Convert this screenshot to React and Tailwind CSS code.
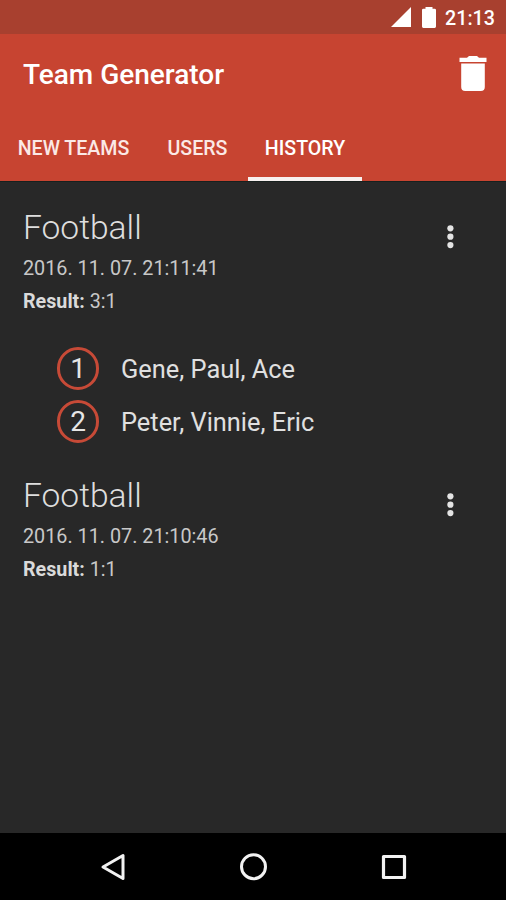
import { useState } from "react";

const tabs = [
  { id: "teams", label: "NEW TEAMS", width: "w-[147px]" },
  { id: "users", label: "USERS", width: "w-[101px]" },
  { id: "history", label: "HISTORY", width: "w-[114px]" },
];

const games = [
  {
    name: "Football",
    date: "2016. 11. 07. 21:11:41",
    result: "3:1",
    teams: ["Gene, Paul, Ace", "Peter, Vinnie, Eric"],
  },
  { name: "Football", date: "2016. 11. 07. 21:10:46", result: "1:1", teams: [] },
];

function StatusBar() {
  return (
    <div className="flex h-[34px] shrink-0 items-center justify-end bg-[#a8402f] pr-[11px] text-white">
      <svg className="mr-[11px] h-5 w-5" viewBox="0 0 20 20" fill="currentColor">
        <path d="M20 0v20H0z" />
      </svg>
      <svg className="mr-[9px] h-[21px] w-[14px]" viewBox="0 0 14 21" fill="currentColor">
        <path d="M3.5 0h7v1.7h2.1Q14 1.7 14 3.1v16.5q0 1.4-1.4 1.4H1.4Q0 21 0 19.6V3.1Q0 1.7 1.4 1.7h2.1z" />
      </svg>
      <span className="pt-[3px] text-[19.7px] leading-6 font-medium">21:13</span>
    </div>
  );
}

function Toolbar() {
  return (
    <div className="flex h-[80px] items-center justify-between pr-[19px] pl-[23px]">
      <h1 className="pt-[2px] text-[28px] leading-8 font-medium">Team Generator</h1>
      <button title="Delete">
        <svg className="h-[36px] w-[28px]" viewBox="0 0 28 36" fill="currentColor">
          <path d="M0.5 1.8h7.5l2-1.8h8l2 1.8h7.5v4.2H0.5zM2.2 7.5h23.6v23.5a4 4 0 0 1-4 4h-15.6a4 4 0 0 1-4-4z" />
        </svg>
      </button>
    </div>
  );
}

function Game({ game }) {
  return (
    <section className="flex flex-col">
      <div className="flex items-start justify-between">
        <div className="pl-[23px]">
          <h2 className="text-[33.6px] leading-[40px] font-light text-[#dedede]">{game.name}</h2>
          <p className="mt-[9px] text-[19.8px] leading-6 text-[#c8c8c8]">{game.date}</p>
          <p className="mt-[9px] text-[19.7px] leading-6 text-[#c8c8c8]">
            <b className="font-bold text-[#dadada]">Result:</b> {game.result}
          </p>
        </div>
        <button className="mt-[17px] mr-[52px]" title="More">
          <svg className="h-6 w-[8px]" viewBox="0 0 8 24" fill="#e4e4e4">
            <circle cx="4.4" cy="3.3" r="3.1" />
            <circle cx="4.4" cy="11.7" r="3.1" />
            <circle cx="4.4" cy="20.1" r="3.1" />
          </svg>
        </button>
      </div>
      {game.teams.length > 0 && (
        <ol className="mt-[33px] mb-[33px] ml-[57px] flex flex-col gap-[10px]">
          {game.teams.map((team, i) => (
            <li key={team} className="flex items-center">
              <span className="flex h-[43px] w-[42px] items-center justify-center rounded-full border-[3px] border-[#c74a37] text-[28px] leading-none text-[#e6e6e6]">
                {i + 1}
              </span>
              <span className="ml-[22px] pt-px text-[25.4px] leading-8 text-[#e0e0e0]">{team}</span>
            </li>
          ))}
        </ol>
      )}
    </section>
  );
}

function NavBar() {
  return (
    <div className="flex h-[67px] shrink-0 items-center justify-center gap-[112px] bg-black pl-[2px]">
      <svg className="h-7 w-7" viewBox="0 0 28 28" fill="none" stroke="#f2f2f2" strokeWidth="3" strokeLinejoin="round">
        <path d="M23 2.5v23L3 14z" />
      </svg>
      <svg className="h-7 w-7" viewBox="0 0 28 28" fill="none" stroke="#f2f2f2" strokeWidth="3">
        <circle cx="13.5" cy="13.7" r="12" />
      </svg>
      <svg className="h-7 w-7" viewBox="0 0 28 28" fill="none" stroke="#f2f2f2" strokeWidth="3.2" strokeLinejoin="round">
        <path d="M3.5 3.5h21v21h-21z" />
      </svg>
    </div>
  );
}

export default function App() {
  const [active, setActive] = useState("history");

  return (
    <div className="flex h-screen w-full flex-col overflow-hidden bg-[#282828] font-['Roboto',sans-serif]">
      <StatusBar />
      <header className="shrink-0 border-b border-[#17201e] bg-[#c74431] text-white">
        <Toolbar />
        <nav className="flex h-[67px]">
          {tabs.map((tab) => (
            <button
              key={tab.id}
              onClick={() => setActive(tab.id)}
              className={`${tab.width} border-b-4 pt-[7px] text-[19.6px] leading-6 font-medium ${
                active === tab.id ? "border-[#f7f0ef]" : "border-transparent text-[#fbe9e6]"
              }`}
            >
              {tab.label}
            </button>
          ))}
        </nav>
      </header>
      <main className="flex-1 pt-[26px]">
        {games.map((game) => (
          <Game key={game.date} game={game} />
        ))}
      </main>
      <NavBar />
    </div>
  );
}
